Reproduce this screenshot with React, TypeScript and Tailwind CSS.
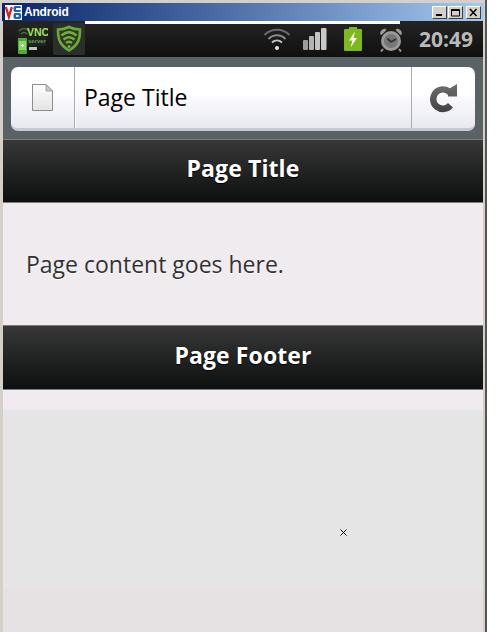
const sans = "font-['Open_Sans','Noto_Sans',sans-serif]";

function VncLogo() {
  return (
    <svg width="17" height="15" viewBox="0 0 20 15" preserveAspectRatio="none" className="shrink-0">
      <rect width="20" height="15" fill="#fff" />
      <path d="M1 2 L4.500 12 L8 2" fill="none" stroke="#d81f1f" strokeWidth="2.600" />
      <rect x="10" y="1" width="9" height="6" rx="2" fill="#1f5fc0" />
      <rect x="10" y="8" width="9" height="6" rx="2" fill="#1f5fc0" />
      <rect x="13" y="3" width="6" height="2" fill="#fff" />
      <rect x="13" y="10" width="3" height="2" fill="#fff" />
    </svg>
  );
}

function WinButton({ kind }: { kind: "min" | "max" | "close" }) {
  return (
    <div className="w-[15px] h-[13px] bg-[#d4d0c8] border border-t-white border-l-white border-r-[#404040] border-b-[#404040] flex items-center justify-center">
      <svg width="11" height="9" viewBox="0 0 11 9">
        {kind === "min" && <rect x="2" y="6" width="6" height="2" fill="#000" />}
        {kind === "max" && <path d="M1.500 1.500h8v6.500h-8z M1.500 1v1.500h8" fill="none" stroke="#000" strokeWidth="1" />}
        {kind === "close" && <path d="M2 1l6.500 7M8.500 1L2 8" stroke="#000" strokeWidth="1.500" />}
      </svg>
    </div>
  );
}

function VncIcon() {
  return (
    <svg width="34" height="32" viewBox="0 0 34 32">
      <rect x="3" y="1" width="29" height="22" fill="#20251f" />
      <path d="M5 8c3-3 7-3 10 0M7 11c2-2 4-2 6 0" stroke="#4f6b45" strokeWidth="1.400" fill="none" />
      <text x="13" y="13" fontSize="10.500" fontWeight="700" fill="#a8e060" fontFamily="Liberation Sans">VNC</text>
      <text x="14" y="20" fontSize="6" fontWeight="700" fill="#6f9a50" fontFamily="Liberation Sans">server</text>
      <rect x="4" y="15" width="9" height="16" rx="1" fill="#54a83a" />
      <rect x="5" y="18" width="7" height="9" fill="#8fd66a" />
      <path d="M7 22.500h3M8.500 21v3" stroke="#fff" strokeWidth="1" />
      <rect x="15" y="24" width="8" height="3" fill="#c4c4c4" />
    </svg>
  );
}

function ShieldIcon() {
  return (
    <svg width="32" height="32" viewBox="0 0 32 32">
      <rect width="32" height="32" rx="2" fill="#2b2f2b" />
      <path d="M16 4c4 2 7 2.500 11 2.500c0 9-1 15-11 21c-10-6-11-12-11-21c4 0 7-.5 11-2.500z" fill="#2c3b22" stroke="#6fa83c" strokeWidth="2.600" />
      <path d="M8.500 12.500c5-4.500 10-4.500 15 0M10.500 16.500c3.500-3 7.500-3 11 0M13 20c1.800-1.500 4.200-1.500 6 0" fill="none" stroke="#74ae3e" strokeWidth="2.400" />
      <circle cx="16" cy="23.500" r="1.500" fill="#74ae3e" />
    </svg>
  );
}

function Wifi() {
  return (
    <svg width="28" height="24" viewBox="0 0 28 24">
      <path d="M1.500 8c7-7 18-7 25 0" fill="none" stroke="#6b6b6b" strokeWidth="2" />
      <path d="M5.500 12c5-5 12-5 17 0" fill="none" stroke="#8a8a8a" strokeWidth="2" />
      <path d="M9 15.500c3-2.800 7-2.800 10 0" fill="none" stroke="#c4c4c4" strokeWidth="2" />
      <circle cx="14" cy="21" r="2" fill="#e6e6e6" />
    </svg>
  );
}

function Signal() {
  return (
    <svg width="24" height="22" viewBox="0 0 24 22">
      <rect x="0" y="12" width="5" height="10" rx="1" fill="#9c9c9c" />
      <rect x="6" y="8" width="5" height="14" rx="1" fill="#b4b4b4" />
      <rect x="12" y="4" width="5" height="18" rx="1" fill="#c4c4c4" />
      <rect x="18" y="0" width="5.500" height="22" rx="1" fill="#c8c8c8" />
    </svg>
  );
}

function Battery() {
  return (
    <svg width="18" height="24" viewBox="0 0 18 24">
      <rect x="5" y="0" width="8" height="2" fill="#7cb518" />
      <rect x="0" y="2" width="18" height="22" rx="1" fill="#7fb81a" />
      <path d="M11 4.500L5 13.500h3.500L6.500 20.500l6.500-9.500H9.500z" fill="#fff" />
    </svg>
  );
}

function Alarm() {
  return (
    <svg width="24" height="25" viewBox="0 0 24 25">
      <circle cx="12" cy="14" r="10" fill="#9a9a9a" />
      <path d="M1 7c0-3 2-5 5-5.500l1.500 1.500L2.500 8zM23 7c0-3-2-5-5-5.500L16.500 3l5 5z" fill="#9a9a9a" />
      <path d="M4 22l-2 2.500M20 22l2 2.500" stroke="#9a9a9a" strokeWidth="2" />
      <circle cx="12" cy="14" r="7" fill="#777" />
      <path d="M12 15l-3.500-3.500M12 15l5-3" stroke="#333" strokeWidth="2" />
    </svg>
  );
}

function PageIcon() {
  return (
    <svg width="21" height="27" viewBox="0 0 21 27">
      <defs>
        <linearGradient id="pg" x1="0" y1="0" x2="0" y2="1">
          <stop offset="0" stopColor="#fdfdfd" />
          <stop offset="1" stopColor="#e4e4e4" />
        </linearGradient>
      </defs>
      <path d="M.5.500h13.500l6.500 6.500v19.500H.5z" fill="url(#pg)" stroke="#8c8c8c" />
      <path d="M14 .5v6.500h6.500z" fill="#c8c8c8" stroke="#8c8c8c" strokeWidth="0.700" />
    </svg>
  );
}

function Reload() {
  return (
    <svg width="28" height="31" viewBox="0 0 28 31">
      <defs>
        <linearGradient id="rl" x1="0" y1="0" x2="0" y2="1">
          <stop offset="0" stopColor="#6e6e70" />
          <stop offset="1" stopColor="#424245" />
        </linearGradient>
      </defs>
      <path
        d="M20 6.200A13 13 0 1 0 23 25.500L18 21A6.500 6.500 0 1 1 18 13L18 14.500H27V2Z"
        fill="url(#rl)"
      />
    </svg>
  );
}

function Bar({ children }: { children: string }) {
  return (
    <div className="h-full border-y border-[#7c7c7c] bg-gradient-to-b from-[#383838] to-[#0e1010] flex items-center justify-center pb-[5px]">
      <span className={`${sans} font-bold text-[23px] tracking-[0.1px] text-white [text-shadow:0_1px_1px_#000]`}>
        {children}
      </span>
    </div>
  );
}

export default function App() {
  return (
    <div className="w-[500px] h-[632px] bg-white overflow-hidden">
      <div className="w-[487px] h-[632px] bg-[#d4d0c8] flex flex-col pl-[3px] pr-[2px] border-r-2 border-[#555] pt-[3px]">
        <div className="h-[18px] -ml-[1px] -mr-[1px] flex items-center justify-between pl-[3px] pr-[3px] bg-gradient-to-r from-[#0a246a] to-[#a6caf0] shrink-0">
          <div className="flex items-center gap-[2px]">
            <VncLogo />
            <span className="font-['Liberation_Sans',sans-serif] font-bold text-[12px] tracking-[-0.2px] text-white leading-none">Android</span>
          </div>
          <div className="flex items-center">
            <WinButton kind="min" />
            <div className="w-[1px]" />
            <WinButton kind="max" />
            <div className="w-[3px]" />
            <WinButton kind="close" />
          </div>
        </div>

        <div className="h-[36px] shrink-0 bg-gradient-to-b from-[#242424] to-[#111] border-b-2 border-[#111] relative flex items-center pl-[11px] pr-[10px]">
          <div className="absolute top-0 left-[82px] w-[315px] h-[3px] bg-[#fffbe8]" />
          <div className="flex items-center gap-[5px] mt-[2px]">
            <VncIcon />
            <ShieldIcon />
          </div>
          <div className="ml-auto flex items-center mt-[2px]">
            <Wifi />
            <div className="w-[12px]" />
            <Signal />
            <div className="w-[17px]" />
            <Battery />
            <div className="w-[17px]" />
            <Alarm />
            <div className="w-[16px]" />
            <span className={`${sans} font-bold text-[21px] text-[#b9b9b9] leading-none`}>20:49</span>
          </div>
        </div>

        <div className="h-[82px] shrink-0 bg-[#596264] pt-[10px] px-[8px]">
          <div className="h-[64px] rounded-[7px] overflow-hidden flex bg-gradient-to-b from-white from-[45%] via-[#fafafd] to-[#e8e8f0] border-b-[3px] border-[#c8c8d0]">
            <div className="w-[64px] flex items-center justify-center border-r border-r-[#a8acb0]">
              <PageIcon />
            </div>
            <div className={`${sans} flex-1 flex items-center pl-[8px] text-[23px] text-black border-l border-l-white`}>Page Title</div>
            <div className="w-[64px] flex items-center justify-center border-l border-l-[#a8acb0]">
              <Reload />
            </div>
          </div>
        </div>

        <div className="h-[64px] shrink-0">
          <Bar>Page Title</Bar>
        </div>

        <div className={`${sans} h-[122px] shrink-0 bg-[#efebef] flex items-center pl-[23px] text-[23px] text-[#333] [text-shadow:0_1px_0_#fff]`}>
          Page content goes here.
        </div>

        <div className="h-[65px] shrink-0">
          <Bar>Page Footer</Bar>
        </div>

        <div className="h-[20px] shrink-0 bg-[#efebef]" />
        <div className="h-[178px] shrink-0 bg-[#e5e5e5] relative">
          <svg width="7" height="7" viewBox="0 0 7 7" className="absolute left-[337px] top-[119px]">
            <path d="M.5.500l6 6M6.500.5l-6 6" stroke="#000" strokeWidth="1" />
          </svg>
        </div>
        <div className="flex-1 bg-[#e6e2e4]" />
      </div>
    </div>
  );
}
